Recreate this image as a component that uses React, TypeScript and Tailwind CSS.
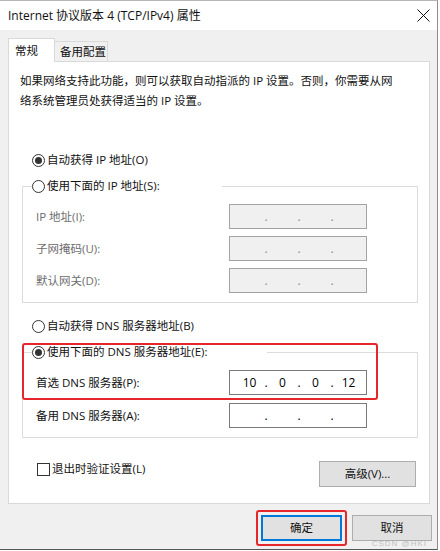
import type { ReactNode } from "react";

const FONT = "font-[Open_Sans,Noto_Sans_CJK_SC,sans-serif]";

function Radio({ checked, children }: { checked?: boolean; children: ReactNode }) {
  return (
    <span className="flex items-center h-[20px] gap-[2px] whitespace-nowrap">
      <span className="flex items-center justify-center w-[13px] h-[13px] rounded-full border border-[#333] bg-white">
        {checked && <span className="w-[7px] h-[7px] rounded-full bg-[#333]" />}
      </span>
      <span>{children}</span>
    </span>
  );
}

function IpField({ values, disabled }: { values?: string[]; disabled?: boolean }) {
  const octets = values ?? ["", "", "", ""];
  return (
    <div
      className={
        disabled
          ? "flex items-center w-[138px] h-[25px] pl-[6px] border border-[#a3a3a3] bg-[#f0f0f0] text-[#8a8a8a]"
          : "flex items-center w-[138px] h-[25px] pl-[6px] border border-[#7a7a7a] bg-white text-black"
      }
    >
      {octets.map((v, i) => (
        <div key={i} className="flex items-center">
          <span className="w-[27px] text-center text-[12px]">{v}</span>
          {i < 3 && <span className="w-[6px] text-center text-[12px] leading-none">.</span>}
        </div>
      ))}
    </div>
  );
}

function FieldRow({ label, disabled, values }: { label: string; disabled?: boolean; values?: string[] }) {
  return (
    <div className="flex items-center h-[25px]">
      <span className={disabled ? "w-[206px] pl-[13px] text-[#6d6d6d]" : "w-[206px] pl-[13px]"}>{label}</span>
      <IpField disabled={disabled} values={values} />
    </div>
  );
}

export default function App() {
  return (
    <div className={`w-[440px] h-[551px] bg-white text-[11.5px] text-[#111] relative overflow-hidden ${FONT}`}>
      <div className="w-[438px] h-[550px] flex flex-col border-r border-b border-t border-r-[#8c8c8c] border-b-[#555] border-t-[#b5b5b5]">
        {/* title bar */}
        <div className="h-[29px] bg-white flex items-center justify-between pl-[8px] pr-[6px]">
          <span className="text-[12px] whitespace-nowrap">Internet 协议版本 4 (TCP/IPv4) 属性</span>
          <svg width="13" height="13" viewBox="0 0 13 13" className="mr-[1px]">
            <path d="M0.5 0.5 L12.5 12.5 M12.5 0.5 L0.5 12.5" stroke="#111" strokeWidth="1" fill="none" />
          </svg>
        </div>

        <div className="flex-1 bg-[#f0f0f0] pt-[8px] relative">
          {/* tabs */}
          <div className="flex items-end ml-[8px] -mb-px relative z-10 h-[24px]">
            <div className="w-[47px] h-[24px] bg-white border border-b-0 border-[#d9d9d9] pl-[6px] pt-[2px] leading-[20px]">
              常规
            </div>
            <div className="w-[53px] h-[20px] mb-[1px] border border-l-0 border-b-0 border-[#d9d9d9] bg-[#f0f0f0] pl-[5px] leading-[20px]">
              备用配置
            </div>
          </div>

          {/* panel */}
          <div className="ml-[8px] w-[422px] h-[443px] bg-white border border-[#d9d9d9] relative">
            <div className="mt-[9px] ml-[11px] leading-[20px] whitespace-nowrap">
              <div>如果网络支持此功能，则可以获取自动指派的 IP 设置。否则，你需要从网</div>
              <div>络系统管理员处获得适当的 IP 设置。</div>
            </div>

            <div className="mt-[39px] ml-[23px]">
              <Radio checked>自动获得 IP 地址(O)</Radio>
            </div>

            <fieldset className="mt-[6px] ml-[13px] w-[396px] border border-[#dcdcdc] pt-[8px] pb-[9px] flex flex-col gap-[7px]">
              <legend className="ml-[9px] w-[190px]">
                <Radio>使用下面的 IP 地址(S):</Radio>
              </legend>
              <FieldRow label="IP 地址(I):" disabled />
              <FieldRow label="子网掩码(U):" disabled />
              <FieldRow label="默认网关(D):" disabled />
            </fieldset>

            <div className="mt-[13px] ml-[23px]">
              <Radio>自动获得 DNS 服务器地址(B)</Radio>
            </div>

            <fieldset className="mt-[6px] ml-[13px] w-[396px] border border-[#dcdcdc] pt-[8px] pb-[9px] flex flex-col gap-[8px]">
              <legend className="ml-[9px] w-[235px]">
                <Radio checked>使用下面的 DNS 服务器地址(E):</Radio>
              </legend>
              <FieldRow label="首选 DNS 服务器(P):" values={["10", "0", "0", "12"]} />
              <FieldRow label="备用 DNS 服务器(A):" />
            </fieldset>

            <div className="mt-[21px] flex justify-between items-start">
              <span className="ml-[28px] flex items-center h-[20px] gap-[2px]">
                <span className="w-[13px] h-[13px] border border-[#333] bg-white" />
                <span>退出时验证设置(L)</span>
              </span>
              <button className="mt-[2px] mr-[13px] w-[97px] h-[26px] bg-[#e1e1e1] border border-[#adadad] text-[11.5px]">
                高级(V)...
              </button>
            </div>

            {/* annotation around DNS section */}
            <div className="absolute left-[13px] top-[281px] w-[356px] h-[57px] border-2 border-[#e5262b] rounded-[3px] pointer-events-none" />
          </div>

          {/* dialog buttons */}
          <div className="mt-[6px] flex justify-end items-center pr-[5px]">
            <div className="p-[3px] border-2 border-[#e5262b] rounded-[3px]">
              <button className="w-[81px] h-[26px] bg-[#e1e1e1] border-2 border-[#0078d7] text-[11.5px]">确定</button>
            </div>
            <button className="ml-[5px] w-[80px] h-[26px] bg-[#e1e1e1] border border-[#adadad] text-[11.5px]">取消</button>
          </div>

          <span className="absolute right-[10px] bottom-[1px] text-[8px] leading-[9px] tracking-[1px] text-[#c0c0c0] font-[Liberation_Sans,sans-serif]">
            CSDN @HKI
          </span>
        </div>
      </div>
    </div>
  );
}
